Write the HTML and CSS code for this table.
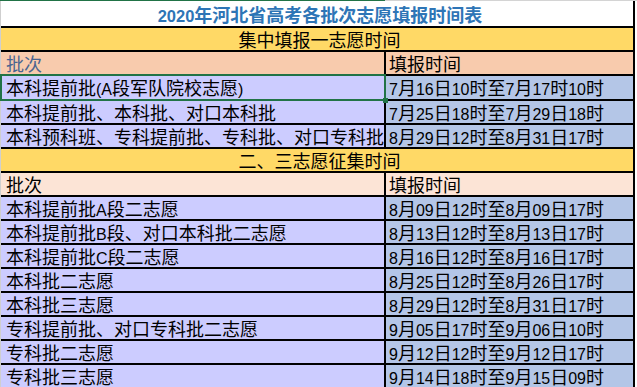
FILE: index.html
```html
<!DOCTYPE html>
<html lang="zh-CN">
<head>
<meta charset="utf-8">
<title>2020年河北省高考各批次志愿填报时间表</title>
<link rel="stylesheet" href="styles.css">
</head>
<body>
<div class="sheet">
  <div class="topline"><span class="tl-sel"></span><span class="tl-rest"></span></div>
  <div class="row title"><span class="tn">2020</span>年河北省高考各批次志愿填报时间表</div>
  <div class="row section">集中填报一志愿时间</div>
  <div class="row head head1"><div class="c1 h-blue">批次</div><div class="c2">填报时间</div></div>
  <div class="row data sel"><div class="c1">本科提前批<span class="n">(A</span>段军队院校志愿<span class="n">)</span></div><div class="c2"><span class="n">7</span>月<span class="n">16</span>日<span class="n">10</span>时至<span class="n">7</span>月<span class="n">17</span>时<span class="n">10</span>时</div></div>
  <div class="row data"><div class="c1">本科提前批、本科批、对口本科批</div><div class="c2"><span class="n">7</span>月<span class="n">25</span>日<span class="n">18</span>时至<span class="n">7</span>月<span class="n">29</span>日<span class="n">18</span>时</div></div>
  <div class="row data"><div class="c1">本科预科班、专科提前批、专科批、对口专科批</div><div class="c2"><span class="n">8</span>月<span class="n">29</span>日<span class="n">12</span>时至<span class="n">8</span>月<span class="n">31</span>日<span class="n">17</span>时</div></div>
  <div class="row section">二、三志愿征集时间</div>
  <div class="row head head2"><div class="c1">批次</div><div class="c2">填报时间</div></div>
  <div class="row data"><div class="c1">本科提前批<span class="n">A</span>段二志愿</div><div class="c2"><span class="n">8</span>月<span class="n">09</span>日<span class="n">12</span>时至<span class="n">8</span>月<span class="n">09</span>日<span class="n">17</span>时</div></div>
  <div class="row data"><div class="c1">本科提前批<span class="n">B</span>段、对口本科批二志愿</div><div class="c2"><span class="n">8</span>月<span class="n">13</span>日<span class="n">12</span>时至<span class="n">8</span>月<span class="n">13</span>日<span class="n">17</span>时</div></div>
  <div class="row data"><div class="c1">本科提前批<span class="n">C</span>段二志愿</div><div class="c2"><span class="n">8</span>月<span class="n">16</span>日<span class="n">12</span>时至<span class="n">8</span>月<span class="n">16</span>日<span class="n">17</span>时</div></div>
  <div class="row data"><div class="c1">本科批二志愿</div><div class="c2"><span class="n">8</span>月<span class="n">25</span>日<span class="n">12</span>时至<span class="n">8</span>月<span class="n">26</span>日<span class="n">17</span>时</div></div>
  <div class="row data"><div class="c1">本科批三志愿</div><div class="c2"><span class="n">8</span>月<span class="n">29</span>日<span class="n">12</span>时至<span class="n">8</span>月<span class="n">31</span>日<span class="n">17</span>时</div></div>
  <div class="row data"><div class="c1">专科提前批、对口专科批二志愿</div><div class="c2"><span class="n">9</span>月<span class="n">05</span>日<span class="n">17</span>时至<span class="n">9</span>月<span class="n">06</span>日<span class="n">10</span>时</div></div>
  <div class="row data"><div class="c1">专科批二志愿</div><div class="c2"><span class="n">9</span>月<span class="n">12</span>日<span class="n">12</span>时至<span class="n">9</span>月<span class="n">12</span>日<span class="n">17</span>时</div></div>
  <div class="row data"><div class="c1">专科批三志愿</div><div class="c2"><span class="n">9</span>月<span class="n">14</span>日<span class="n">18</span>时至<span class="n">9</span>月<span class="n">15</span>日<span class="n">09</span>时</div></div>
</div>
</body>
</html>
```
FILE: styles.css
```css
html, body {
  margin: 0;
  padding: 0;
  background: #ffffff;
  overflow: hidden;
}

body {
  width: 637px;
  height: 387px;
  font-family: "Liberation Sans", "Noto Sans CJK SC", sans-serif;
  font-size: 18px;
  line-height: 18px;
  color: #000000;
}

.sheet {
  width: 634px;
  border-left: 1px solid #cfcfcf;
}

.topline {
  display: flex;
  height: 1px;
  margin-left: -1px;
  width: 637px;
}

.tl-sel {
  width: 385px;
  background: #217346;
}

.tl-rest {
  flex: 1;
  background: #d4d4d4;
}

.row {
  display: flex;
  box-sizing: border-box;
  height: 24px;
  border-bottom: 2px solid #000000;
  border-right: 2px solid #000000;
  white-space: nowrap;
}

.c1,
.c2 {
  box-sizing: border-box;
  height: 100%;
  padding-top: 4px;
  overflow: hidden;
}

.c1 {
  width: 385px;
  padding-left: 5px;
  border-right: 2px solid #000000;
}

.c2 {
  flex: 1;
  padding-left: 3px;
}

.title {
  height: 27px;
  padding-top: 6px;
  justify-content: center;
  padding-left: 6px;
  background: #ffffff;
  color: #2e75b6;
  font-weight: bold;
}

.tn {
  font-size: 16.5px;
}

.section {
  padding-top: 4px;
  justify-content: center;
  padding-left: 5px;
  background: #ffd966;
}

.head1 .c1,
.head1 .c2 {
  background: #f8cbad;
}

.head2 .c1,
.head2 .c2 {
  background: #fce4d6;
}

.h-blue {
  color: #4a6590;
}

.data .c1 {
  background: #ccccff;
}

.data .c2 {
  background: #b4c6e7;
}

.n {
  font-size: 16px;
}

.sel {
  height: 25px;
}

.sel .c1 {
  position: relative;
  overflow: visible;
  padding-top: 4px;
}

.sel .c2 {
  padding-top: 4px;
}

.sel .c1::after {
  content: "";
  position: absolute;
  left: -1px;
  top: -2px;
  right: -2px;
  bottom: -2px;
  border: 2px solid #217346;
  pointer-events: none;
}

.sel .c1::before {
  content: "";
  position: absolute;
  right: -4px;
  bottom: -4px;
  width: 5px;
  height: 5px;
  background: #217346;
  z-index: 1;
}
```
